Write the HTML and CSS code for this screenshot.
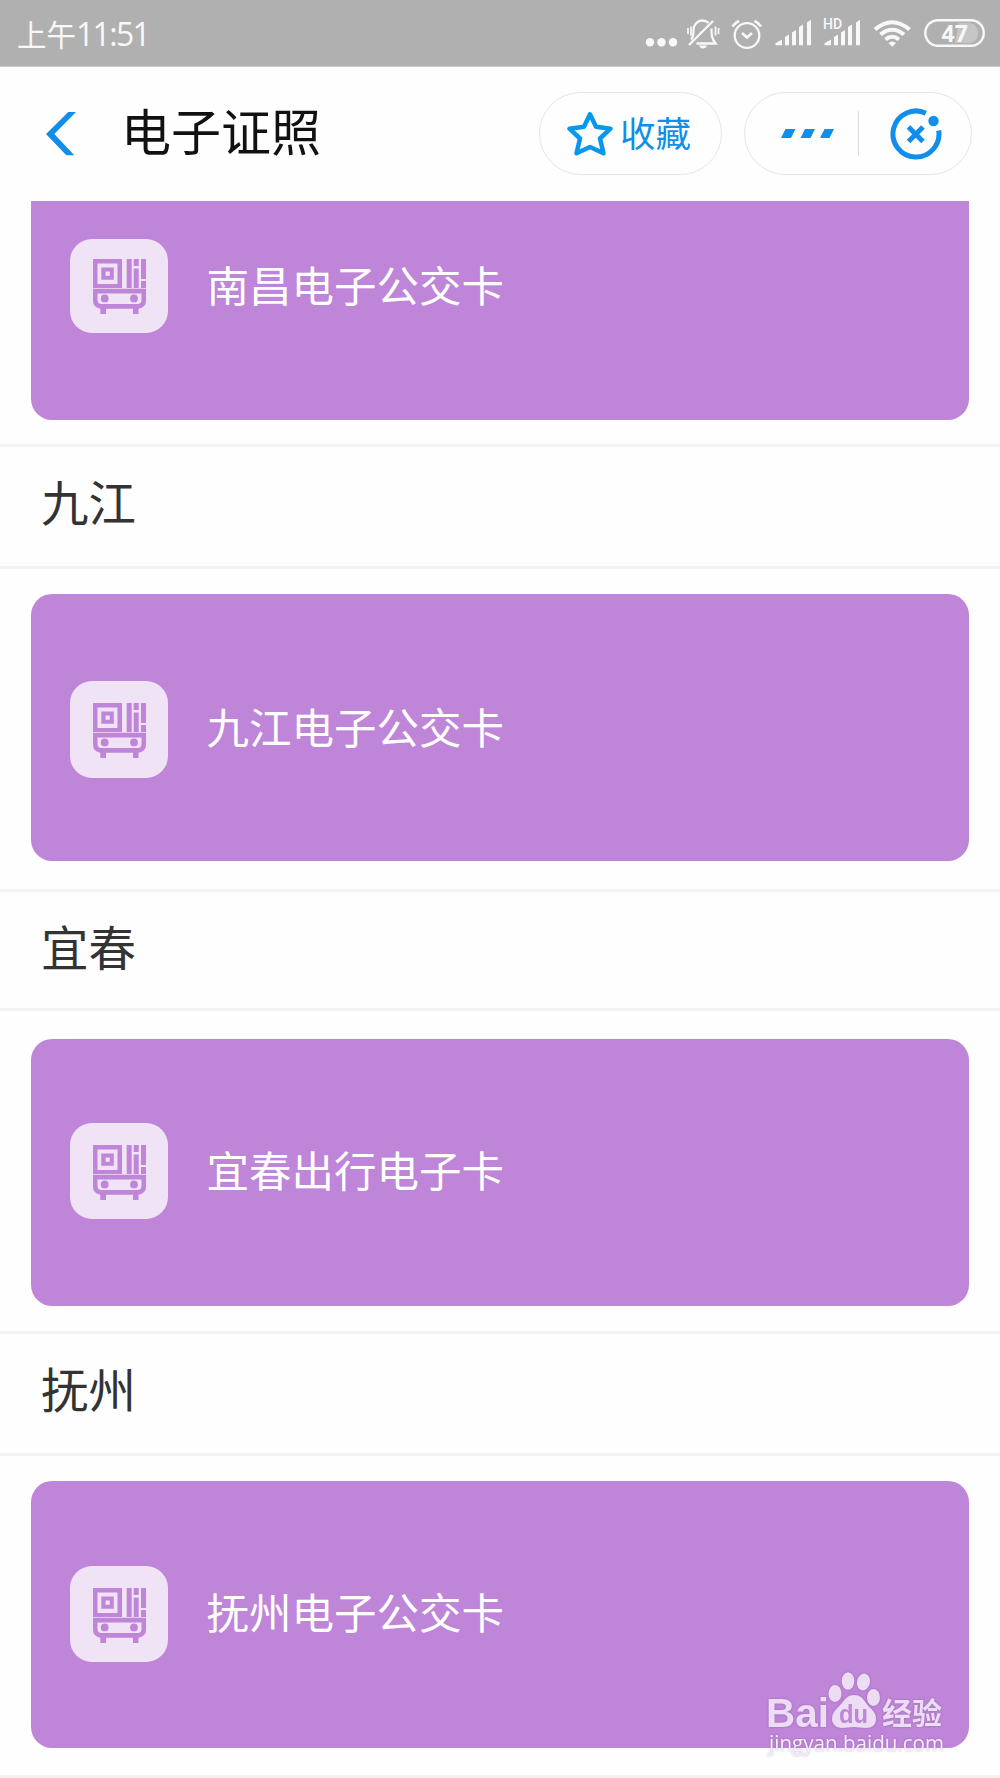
FILE: index.html
```html
<!DOCTYPE html>
<html lang="zh-CN">
<head>
	<meta charset="utf-8">
	<meta name="viewport" content="width=device-width, initial-scale=1">
	<title>电子证照</title>
	<link rel="stylesheet" href="styles.css">
</head>
<body>
	<!-- Shared bus card icon -->
	<svg class="sprite" width="0" height="0">
		<symbol id="bus" viewBox="0 0 53 55">
			<path fill-rule="evenodd" d="M0 0h29v29H0zM4.500 4.500v20.500h20v-20.500z"/>
			<path fill-rule="evenodd" d="M8.300 8.500h12.500v12.200H8.300zM12.600 12.600v4.200h4.200v-4.200z"/>
			<path d="M33.700 0h5v29h-5zM40.700 0h5v7h-5zM40.700 9.500h5V29h-5zM48 0h5v20h-5zM48 22h5v7h-5z"/>
			<path fill-rule="evenodd" d="M0 29.800h53V42q0 6-7.500 7.800V55H40v-5.300H13V55H7.300v-5.200Q0 48 0 42zM4.500 34.500V41q0 4 4 4h36q4 0 4-4v-6.500z"/>
			<circle cx="11.700" cy="39.400" r="3.900"/>
			<circle cx="41" cy="39.400" r="3.900"/>
		</symbol>
	</svg>

	<div class="status-bar">
		<span class="time">上午<b>11:51</b></span>
		<div class="status-icons">
			<svg width="42" height="66" viewBox="0 0 42 66">
				<circle cx="10" cy="42.200" r="4.200"/>
				<circle cx="21.500" cy="42.200" r="4.200"/>
				<circle cx="33" cy="42.200" r="4.200"/>
			</svg>
			<svg class="line" width="43" height="66" viewBox="0 0 43 66">
				<path d="M9 39.500c2-2 2.500-4 2.500-9.500 0-5.500 4-9.500 9-9.500 2.500 0 4.500 1 6 2.300M29.500 28.500c0 8 .5 10 4 15H14.500M7 45L31 21"/>
				<path d="M6 28v6M9 26.500v9M33.500 26.500v9M36.500 28v6" stroke-width="1.700"/>
				<path class="solid" d="M17 45.500h8q-1 3-4 3t-4-3z"/>
			</svg>
			<svg class="line" width="43" height="66" viewBox="0 0 43 66">
				<circle cx="22" cy="35.500" r="12.300"/>
				<path d="M17 33l5 4.500 5-4.500M7.500 26.500q2-3.500 6.500-5.500M36 26.500q-2-3.500-6.500-5.500" stroke-width="2.600"/>
			</svg>
			<svg width="49" height="66" viewBox="0 0 49 66">
				<path d="M7.500 45.300v-2L14 39.500v5.800zM17 37l4-2.600v10.900h-4zM24 32.500l4-2.600v15.400h-4zM31 27l4-2.600v20.900h-4zM39 22.500l4-2.800v25.600h-4z"/>
			</svg>
			<svg width="50" height="66" viewBox="0 0 50 66">
				<text class="hd" x="6" y="28.500">HD</text>
				<path d="M7.500 45.300v-2L14 39.500v5.800zM17 37l4-2.600v10.900h-4zM24 32.500l4-2.600v15.400h-4zM31 27l4-2.600v20.900h-4zM39 22.500l4-2.800v25.600h-4z"/>
			</svg>
			<svg class="line wifi" width="51" height="66" viewBox="0 0 51 66">
				<path d="M8 29.500q17-14.500 34.500 0M13.500 34.500q11.500-9.500 23.500 0M18.500 39.500q6.500-5.500 13.500 0"/>
				<path class="solid" d="M21.500 43q3.700-3 7.500 0l-3.700 3.700z"/>
			</svg>
			<svg width="67" height="66" viewBox="0 0 67 66">
				<path class="charge" d="M41 23h10.500q8.500 1.500 8.500 10t-8.500 10H37z"/>
				<rect class="battery" x="7.300" y="20.200" width="58.500" height="25.600" rx="12.800"/>
				<text class="percent" x="23.500" y="41.700">47</text>
			</svg>
		</div>
	</div>

	<div class="header">
		<svg class="back" width="30" height="44" viewBox="0 0 30 44">
			<path d="M22.300 0H30L8.300 22 28.300 43.200H20.300L0 22z"/>
		</svg>
		<h1>电子证照</h1>
		<div class="pill favorite">
			<svg width="46" height="46" viewBox="0 0 46 46">
				<path d="M23 3.300l6 12.400 14.500 2L33 27.500l3.500 14.700L23 36 9.500 42.200 13 27.500 2.500 17.700l14.500-2z"/>
			</svg>
			<span>收藏</span>
		</div>
		<div class="pill actions">
			<svg class="more" width="53" height="9" viewBox="0 0 53 9">
				<path d="M4.500 0H14.500L10 9H0zM24 0h10L29.500 9h-10zM43.500 0H53l-4.500 9H39z"/>
			</svg>
			<span class="divider"></span>
			<svg class="close" width="52" height="52" viewBox="0 0 52 52">
				<path d="M35.800 5.200A23 23 0 1 0 48.700 22.500"/>
				<path d="M18.500 19L33 33.500M33 19L18.500 33.500"/>
				<circle cx="43.500" cy="13" r="5.200"/>
			</svg>
		</div>
	</div>

	<div class="list">
		<div class="card-row first">
			<div class="card">
				<div class="icon"><svg><use href="#bus"/></svg></div>
				<span>南昌电子公交卡</span>
			</div>
		</div>
		<h2>九江</h2>
		<div class="card-row second">
			<div class="card">
				<div class="icon"><svg><use href="#bus"/></svg></div>
				<span>九江电子公交卡</span>
			</div>
		</div>
		<h2 class="short">宜春</h2>
		<div class="card-row low">
			<div class="card">
				<div class="icon"><svg><use href="#bus"/></svg></div>
				<span>宜春出行电子卡</span>
			</div>
		</div>
		<h2>抚州</h2>
		<div class="card-row last">
			<div class="card">
				<div class="icon"><svg><use href="#bus"/></svg></div>
				<span>抚州电子公交卡</span>
			</div>
		</div>
	</div>

	<!-- Watermark over the last card -->
	<div class="watermark">
		<svg width="182" height="100" viewBox="0 0 182 100">
			<text class="bai" x="0" y="60" textLength="63" lengthAdjust="spacingAndGlyphs">Bai</text>
			<ellipse cx="69" cy="26.500" rx="6.500" ry="8.500"/>
			<ellipse cx="82" cy="14" rx="6.300" ry="8.700"/>
			<ellipse cx="97.500" cy="15" rx="6.500" ry="8.500" transform="rotate(12 97.500 15)"/>
			<ellipse cx="107.500" cy="30.500" rx="6.500" ry="8.500"/>
			<path d="M88 28c6 0 9 3 12 8 4 6 10 8 10 16 0 6-4 9-10 9-5 0-8-1-12-1s-8 1-12 1c-6 0-10-4-10-9 0-8 6-11 10-16s6-8 12-8z"/>
			<text class="du" x="73" y="55.500" textLength="29" lengthAdjust="spacingAndGlyphs">du</text>
			<text class="exp" x="116" y="57">经验</text>
			<text class="url" x="3" y="83.500" textLength="175" lengthAdjust="spacingAndGlyphs">jingyan.baidu.com</text>
		</svg>
	</div>
</body>
</html>
```

FILE: styles.css
```css
* {
	box-sizing: border-box;
}

body {
	margin: 0;
	width: 1000px;
	height: 1778px;
	position: relative;
	overflow: hidden;
	background: #fefefe;
	font-family: "Noto Sans CJK SC", sans-serif;
}

svg {
	display: block;
	flex-shrink: 0;
}

.sprite {
	display: none;
}

/* Status bar */
.status-bar {
	height: 67px;
	padding: 0 15px 0 17px;
	display: flex;
	justify-content: space-between;
	background: #b0b0b0;
	border-bottom: 1px solid #cacaca;
	color: #f8f8f8;
}

.time {
	font-size: 29.5px;
	line-height: 66px;
}

.time b {
	font: 32px "Open Sans", sans-serif;
	letter-spacing: -1.7px;
}

.status-icons {
	display: flex;
	fill: #f8f8f8;
}

.line {
	fill: none;
	stroke: #f8f8f8;
	stroke-width: 2.3;
}

.wifi {
	stroke-width: 4;
}

.solid {
	fill: #f8f8f8;
	stroke: none;
}

.hd {
	font: 500 14px Roboto, sans-serif;
}

.charge {
	fill: #c6c6c6;
}

.battery {
	fill: none;
	stroke: #f8f8f8;
	stroke-width: 2.4;
}

.percent {
	font: bold 23px "Open Sans", sans-serif;
}

/* Header */
.header {
	height: 134px;
	padding: 0 28px 1px 46px;
	display: flex;
	align-items: center;
	background: #fefefe;
}

.back {
	fill: #108ee9;
}

h1 {
	margin: 0 auto 0 45px;
	padding-bottom: 9px;
	font-size: 50px;
	font-weight: 400;
	line-height: 70px;
	color: #111;
}

.pill {
	height: 83px;
	border: 1px solid #e5e5e5;
	border-radius: 42px;
	display: flex;
	align-items: center;
	color: #108ee9;
}

.favorite {
	width: 183px;
	margin-right: 22px;
	padding-left: 27px;
	font-size: 35.500px;
}

.favorite svg {
	fill: none;
	stroke: #0698ec;
	stroke-width: 4.5;
	stroke-linejoin: round;
}

.favorite span {
	margin-left: 7px;
	padding-bottom: 4px;
}

.actions {
	width: 228px;
	padding-left: 36px;
}

.more {
	fill: #108ee9;
}

.divider {
	width: 1px;
	height: 45px;
	margin: 0 31px 0 24px;
	background: #ddd;
}

.close {
	fill: none;
	stroke: #108ee9;
	stroke-width: 5;
}

.close circle {
	fill: #108ee9;
	stroke: none;
}

/* Card list */
.list {
	height: 1577px;
	overflow: hidden;
}

h2 {
	height: 125px;
	margin: 0;
	padding-left: 41px;
	border-top: 3px solid #f2f2f2;
	border-bottom: 3px solid #f2f2f2;
	font-size: 47.500px;
	font-weight: 400;
	line-height: 107px;
	color: #333;
}

.short {
	height: 122px;
}

.card-row {
	height: 320px;
	padding: 25px 31px 0;
	display: flex;
	align-items: flex-start;
}

.first {
	height: 243px;
	align-items: flex-end;
	padding-bottom: 24px;
}

.low {
	padding-top: 28px;
}

.last {
	height: 322px;
	border-bottom: 3px solid #f2f2f2;
}

.card {
	width: 938px;
	height: 266.500px;
	flex-shrink: 0;
	padding-left: 38.500px;
	display: flex;
	align-items: center;
	background: #be85d8;
	border-radius: 21px;
	color: #fff;
	font-size: 42.500px;
}

.card span {
	margin-left: 39px;
	padding-bottom: 7px;
}

.icon {
	width: 98px;
	height: 96px;
	display: flex;
	align-items: center;
	justify-content: center;
	background: #f0e3f6;
	border-radius: 22px;
}

.first .icon {
	height: 94px;
	margin-bottom: 2px;
}

.second .icon {
	height: 97px;
	margin-top: 4px;
}

.second span {
	padding-bottom: 4px;
}

.low .icon {
	margin-bottom: 2px;
}

.icon svg {
	width: 53px;
	height: 55px;
	margin: 2px 0 0 1px;
	fill: #be85d8;
}

/* Watermark */
.watermark {
	position: absolute;
	left: 766px;
	top: 1667px;
	fill: #ecdcf4;
	filter: drop-shadow(0 0 1px rgba(100, 60, 120, 0.4));
}

.watermark svg {
	overflow: visible;
}

.bai {
	font: bold 41px "Liberation Sans", sans-serif;
}

.du {
	font: bold 25px "Liberation Sans", sans-serif;
	fill: #be85d8;
}

.exp {
	font: bold 30px "Noto Sans CJK SC", sans-serif;
}

.url {
	font: 22px "Open Sans", sans-serif;
	fill: #f6eefa;
}
```
